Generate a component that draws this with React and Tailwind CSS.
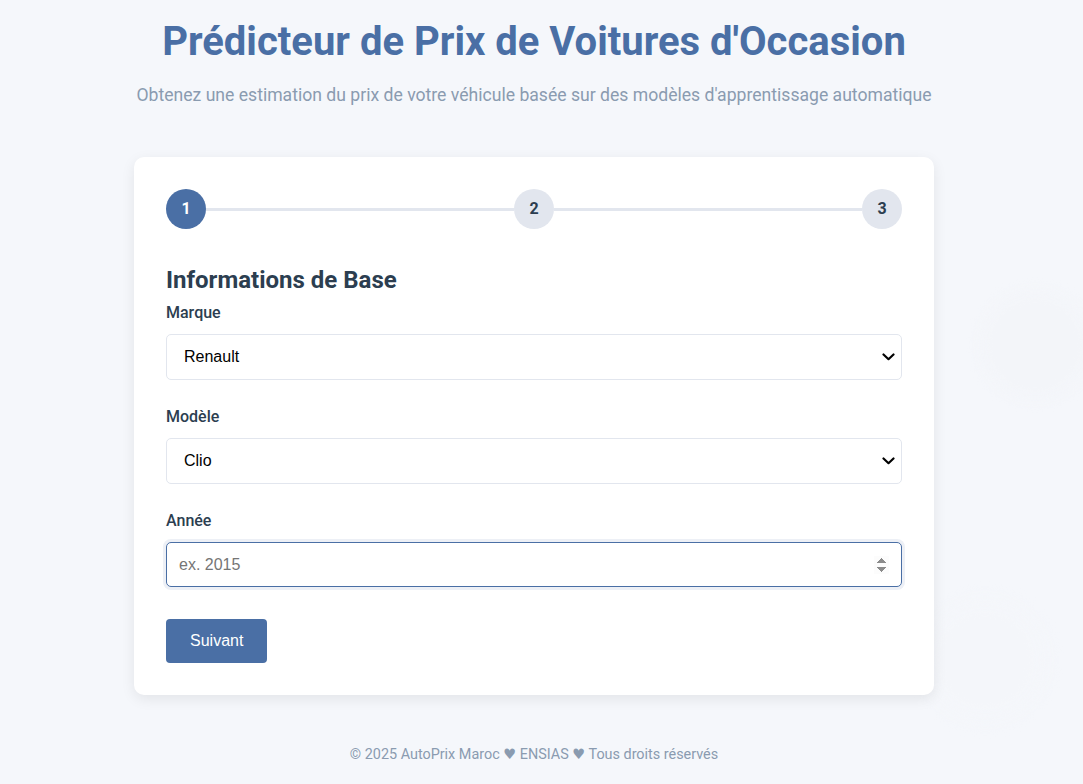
import { useState } from 'react';

const steps = [1, 2, 3];

const Chevron = () => (
    <svg width="13" height="8" viewBox="0 0 13 8" className="pointer-events-none absolute right-[7px] top-1/2 -translate-y-1/2">
        <path d="M1.5 1.5 L6.5 6.2 L11.5 1.5" fill="none" stroke="#000" strokeWidth="2.2" strokeLinecap="round" strokeLinejoin="round" />
    </svg>
);

const App = () => {
    const [marque, setMarque] = useState('Renault');
    const [modele, setModele] = useState('Clio');
    const [annee, setAnnee] = useState('');

    return (
        <div className="relative min-h-[784px] overflow-hidden bg-[#f5f7fb] font-['Roboto',sans-serif]">
            <div className="pointer-events-none absolute left-[980px] top-[290px] h-[110px] w-[110px] rounded-full bg-[#f3f5f9] blur-[6px]" />
            <div className="pointer-events-none absolute left-[925px] top-[600px] h-[120px] w-[120px] rounded-full bg-[#f4f6fa] blur-[8px]" />

            <div className="relative w-[1068px]">
                <div className="mx-auto w-[800px] pt-[18px]">
                    <header className="text-center">
                        <h1 className="whitespace-nowrap text-[40px] font-bold leading-[1.2] text-[#4a6fa5]">
                            Prédicteur de Prix de Voitures d'Occasion
                        </h1>
                        <p className="mt-[16px] whitespace-nowrap text-[17.6px] leading-[1.5] text-[#8a9bb0]">
                            Obtenez une estimation du prix de votre véhicule basée sur des modèles d'apprentissage automatique
                        </p>
                    </header>

                    <div className="mt-[49px] rounded-[10px] bg-white p-8 shadow-[0_4px_14px_rgba(0,0,0,0.08)]">
                        <div className="mb-[37px] flex items-center">
                            {steps.map((s, i) => (
                                <div key={s} className={`flex items-center ${i < steps.length - 1 ? 'flex-1' : ''}`}>
                                    <div
                                        className={`flex h-10 w-10 shrink-0 items-center justify-center rounded-full text-base font-bold ${
                                            s === 1 ? 'bg-[#4a6fa5] text-white' : 'bg-[#e2e6ee] text-[#2c3e50]'
                                        }`}
                                    >
                                        {s}
                                    </div>
                                    {i < steps.length - 1 && <div className="h-[3px] flex-1 bg-[#e2e6ee]" />}
                                </div>
                            ))}
                        </div>

                        <h2 className="mb-[6px] text-2xl font-bold leading-[1.2] text-[#2c3e50]">Informations de Base</h2>

                        <div className="mb-[25px]">
                            <label className="mb-[9px] block text-base font-medium leading-6 text-[#2c3e50]">Marque</label>
                            <div className="relative">
                                <select
                                    value={marque}
                                    onChange={(e) => setMarque(e.target.value)}
                                    className="h-[46px] w-full appearance-none rounded-[5px] border border-[#e2e6ee] bg-white px-[17px] font-['Liberation_Sans',Arial,sans-serif] text-base text-black outline-none"
                                >
                                    <option>Renault</option>
                                    <option>Peugeot</option>
                                    <option>Dacia</option>
                                </select>
                                <Chevron />
                            </div>
                        </div>

                        <div className="mb-[25px]">
                            <label className="mb-[9px] block text-base font-medium leading-6 text-[#2c3e50]">Modèle</label>
                            <div className="relative">
                                <select
                                    value={modele}
                                    onChange={(e) => setModele(e.target.value)}
                                    className="h-[46px] w-full appearance-none rounded-[5px] border border-[#e2e6ee] bg-white px-[17px] font-['Liberation_Sans',Arial,sans-serif] text-base text-black outline-none"
                                >
                                    <option>Clio</option>
                                    <option>Megane</option>
                                    <option>Captur</option>
                                </select>
                                <Chevron />
                            </div>
                        </div>

                        <div className="mb-8">
                            <label className="mb-[9px] block text-base font-medium leading-6 text-[#2c3e50]">Année</label>
                            <input
                                type="number"
                                autoFocus
                                value={annee}
                                onChange={(e) => setAnnee(e.target.value)}
                                placeholder="ex. 2015"
                                className="h-[45px] w-full rounded-[5px] border border-[#4a6fa5] bg-white px-3 font-['Liberation_Sans',Arial,sans-serif] text-base text-black shadow-[0_0_0_3px_rgba(74,111,165,0.1)] outline-none placeholder:text-[#757575]"
                            />
                        </div>

                        <button className="h-11 rounded-[4px] bg-[#4a6fa5] px-6 font-['Liberation_Sans',Arial,sans-serif] text-base text-white">
                            Suivant
                        </button>
                    </div>

                    <footer className="mt-[49px] pb-6 text-center text-[14.4px] leading-[1.5] text-[#8a9bb0]">
                        © 2025 AutoPrix Maroc <span className="font-['DejaVu_Sans',sans-serif]">♥</span> ENSIAS{' '}
                        <span className="font-['DejaVu_Sans',sans-serif]">♥</span> Tous droits réservés
                    </footer>
                </div>
            </div>
        </div>
    );
};

export default App;
